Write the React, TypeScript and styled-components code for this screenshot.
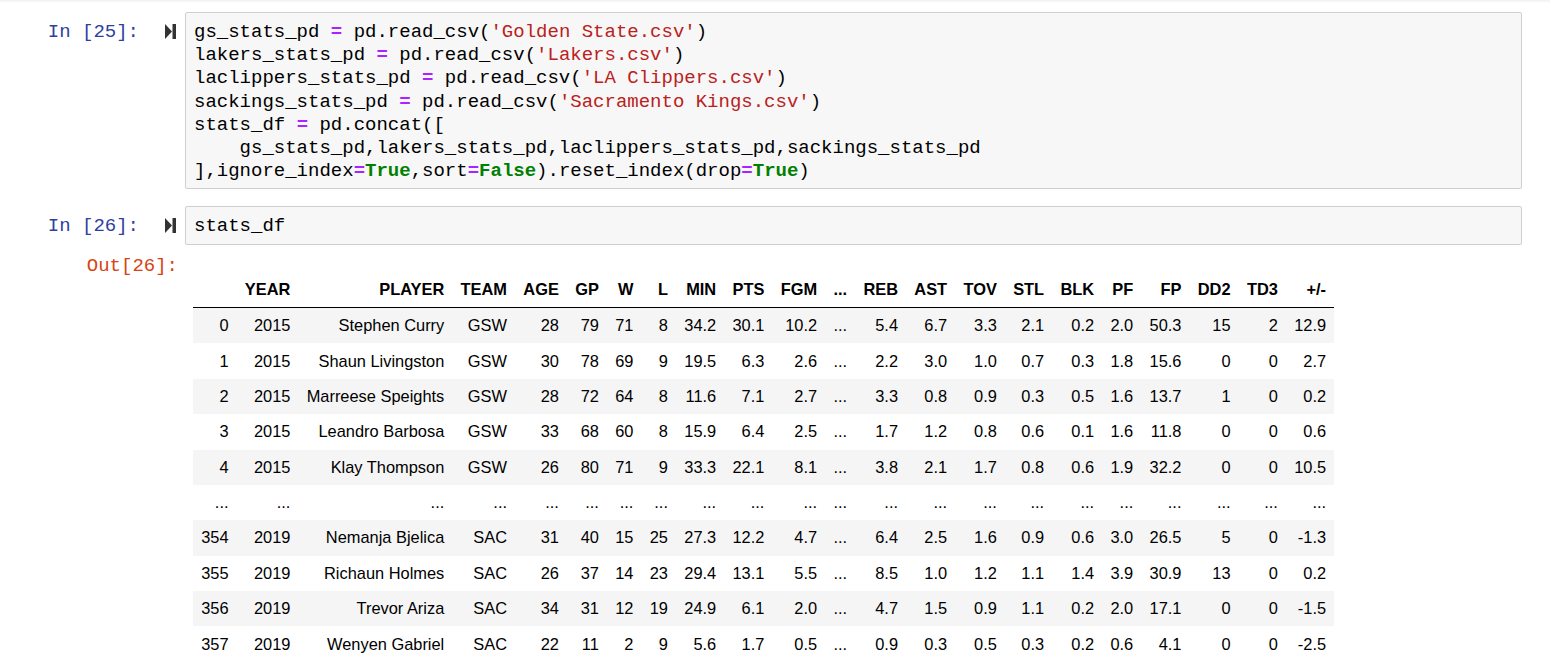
import React, { FC } from 'react'
import styled, { createGlobalStyle } from 'styled-components'

const GlobalStyle = createGlobalStyle`
  html, body {
    margin: 0;
    padding: 0;
    background: #ffffff;
    overflow: hidden;
  }
`

const Page = styled.div`
  width: 1550px;
  height: 656px;
  overflow: hidden;
  padding-top: 12px;
  box-sizing: border-box;
  box-shadow: inset 0 3px 3px -2px rgba(0, 0, 0, 0.08);
`

const InputRow = styled.div`
  display: flex;
  align-items: flex-start;
  margin-bottom: 17px;
`

const OutputRow = styled.div`
  display: flex;
  align-items: flex-start;
  margin-top: -7px;
`

const Prompt = styled.div<{ $out?: boolean }>`
  flex-shrink: 0;
  width: ${({ $out }) => ($out ? '178px' : '139px')};
  padding-top: ${({ $out }) => ($out ? '0' : '9px')};
  text-align: right;
  white-space: pre;
  font-family: 'Liberation Mono', 'DejaVu Sans Mono', monospace;
  font-size: 19px;
  line-height: 23.2px;
  color: ${({ $out }) => ($out ? '#D84315' : '#303F9F')};
`

const RunButton = styled.div`
  flex-shrink: 0;
  width: 11px;
  height: 15px;
  margin: 12px 9px 0 26px;
  color: #333333;

  svg {
    display: block;
  }
`

const CodeBox = styled.pre`
  flex: 0 0 1337px;
  box-sizing: border-box;
  margin: 0;
  padding: 8px 8px 5px 8px;
  background: #f7f7f7;
  border: 1px solid #cfcfcf;
  border-radius: 2px;
  font-family: 'Liberation Mono', 'DejaVu Sans Mono', monospace;
  font-size: 19px;
  line-height: 23.2px;
  color: #000000;
  white-space: pre;
`

const Op = styled.span`
  color: #aa22ff;
  font-weight: bold;
`

const Str = styled.span`
  color: #ba2121;
`

const Kw = styled.span`
  color: #008000;
  font-weight: bold;
`

const TableWrap = styled.div`
  margin-left: 15px;
  padding-top: 17px;
`

const DataTable = styled.table`
  border-collapse: collapse;
  border-spacing: 0;
  border: none;
  color: #000000;
  font-family: 'Liberation Sans', Arial, sans-serif;
  font-size: 16.4px;

  thead {
    border-bottom: 1px solid #000000;
    vertical-align: bottom;
  }

  th,
  td {
    text-align: right;
    vertical-align: middle;
    padding: 8.2px 8.17px;
    line-height: normal;
    white-space: nowrap;
    border: none;
  }

  thead th {
    font-weight: bold;
  }

  tbody th {
    font-weight: normal;
  }
`

const BodyRow = styled.tr<{ $shade: boolean }>`
  background: ${({ $shade }) => ($shade ? '#f5f5f5' : '#ffffff')};
`

const columns = [
  '', 'YEAR', 'PLAYER', 'TEAM', 'AGE', 'GP', 'W', 'L', 'MIN', 'PTS', 'FGM', '...',
  'REB', 'AST', 'TOV', 'STL', 'BLK', 'PF', 'FP', 'DD2', 'TD3', '+/-',
]

const rows: string[][] = [
  ['0', '2015', 'Stephen Curry', 'GSW', '28', '79', '71', '8', '34.2', '30.1', '10.2', '...', '5.4', '6.7', '3.3', '2.1', '0.2', '2.0', '50.3', '15', '2', '12.9'],
  ['1', '2015', 'Shaun Livingston', 'GSW', '30', '78', '69', '9', '19.5', '6.3', '2.6', '...', '2.2', '3.0', '1.0', '0.7', '0.3', '1.8', '15.6', '0', '0', '2.7'],
  ['2', '2015', 'Marreese Speights', 'GSW', '28', '72', '64', '8', '11.6', '7.1', '2.7', '...', '3.3', '0.8', '0.9', '0.3', '0.5', '1.6', '13.7', '1', '0', '0.2'],
  ['3', '2015', 'Leandro Barbosa', 'GSW', '33', '68', '60', '8', '15.9', '6.4', '2.5', '...', '1.7', '1.2', '0.8', '0.6', '0.1', '1.6', '11.8', '0', '0', '0.6'],
  ['4', '2015', 'Klay Thompson', 'GSW', '26', '80', '71', '9', '33.3', '22.1', '8.1', '...', '3.8', '2.1', '1.7', '0.8', '0.6', '1.9', '32.2', '0', '0', '10.5'],
  columns.map(() => '...'),
  ['354', '2019', 'Nemanja Bjelica', 'SAC', '31', '40', '15', '25', '27.3', '12.2', '4.7', '...', '6.4', '2.5', '1.6', '0.9', '0.6', '3.0', '26.5', '5', '0', '-1.3'],
  ['355', '2019', 'Richaun Holmes', 'SAC', '26', '37', '14', '23', '29.4', '13.1', '5.5', '...', '8.5', '1.0', '1.2', '1.1', '1.4', '3.9', '30.9', '13', '0', '0.2'],
  ['356', '2019', 'Trevor Ariza', 'SAC', '34', '31', '12', '19', '24.9', '6.1', '2.0', '...', '4.7', '1.5', '0.9', '1.1', '0.2', '2.0', '17.1', '0', '0', '-1.5'],
  ['357', '2019', 'Wenyen Gabriel', 'SAC', '22', '11', '2', '9', '5.6', '1.7', '0.5', '...', '0.9', '0.3', '0.5', '0.3', '0.2', '0.6', '4.1', '0', '0', '-2.5'],
]

const StepIcon: FC = () => (
  <svg width="11" height="15" viewBox="0 0 11 15">
    <polygon points="0,0 7,7.5 0,15" fill="currentColor" />
    <rect x="7.5" y="0" width="3.5" height="15" fill="currentColor" />
  </svg>
)

const App: FC = () => (
  <Page>
    <GlobalStyle />
    <InputRow>
      <Prompt>In [25]:</Prompt>
      <RunButton>
        <StepIcon />
      </RunButton>
      <CodeBox>
        gs_stats_pd <Op>=</Op> pd.read_csv(<Str>'Golden State.csv'</Str>){'\n'}
        lakers_stats_pd <Op>=</Op> pd.read_csv(<Str>'Lakers.csv'</Str>){'\n'}
        laclippers_stats_pd <Op>=</Op> pd.read_csv(<Str>'LA Clippers.csv'</Str>){'\n'}
        sackings_stats_pd <Op>=</Op> pd.read_csv(<Str>'Sacramento Kings.csv'</Str>){'\n'}
        stats_df <Op>=</Op> pd.concat([{'\n'}
        {'    '}gs_stats_pd,lakers_stats_pd,laclippers_stats_pd,sackings_stats_pd{'\n'}
        ],ignore_index<Op>=</Op><Kw>True</Kw>,sort<Op>=</Op><Kw>False</Kw>).reset_index(drop<Op>=</Op><Kw>True</Kw>)
      </CodeBox>
    </InputRow>
    <InputRow>
      <Prompt>In [26]:</Prompt>
      <RunButton>
        <StepIcon />
      </RunButton>
      <CodeBox>stats_df</CodeBox>
    </InputRow>
    <OutputRow>
      <Prompt $out>Out[26]:</Prompt>
      <TableWrap>
        <DataTable>
          <thead>
            <tr>
              {columns.map((c, i) => (
                <th key={i}>{c}</th>
              ))}
            </tr>
          </thead>
          <tbody>
            {rows.map((r, ri) => (
              <BodyRow key={ri} $shade={ri % 2 === 0}>
                {r.map((v, ci) =>
                  ci === 0 ? <th key={ci}>{v}</th> : <td key={ci}>{v}</td>
                )}
              </BodyRow>
            ))}
          </tbody>
        </DataTable>
      </TableWrap>
    </OutputRow>
  </Page>
)

export default App
